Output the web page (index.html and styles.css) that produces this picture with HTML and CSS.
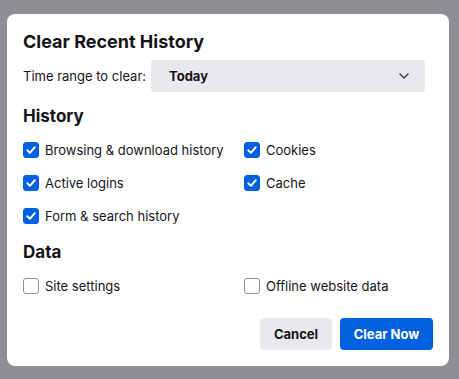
FILE: index.html
```html
<!DOCTYPE html>
<html lang="en">
<head>
    <meta charset="UTF-8">
    <meta name="viewport" content="width=device-width, initial-scale=1.0">
    <title>Clear Recent History</title>
    <link rel="stylesheet" href="styles.css">
</head>
<body>
    <div class="backdrop">
        <div class="dialog">
            <h1>Clear Recent History</h1>
            <div class="range-row">
                <span class="range-label">Time range to clear:</span>
                <div class="select">
                    <span class="select-value">Today</span>
                    <svg class="chevron" width="10" height="6" viewBox="0 0 10 6">
                        <path d="M1 1 L5 5 L9 1" fill="none" stroke="#3a3a3e" stroke-width="1.4" stroke-linecap="round" stroke-linejoin="round"/>
                    </svg>
                </div>
            </div>

            <h2>History</h2>
            <div class="options">
                <label class="option"><span class="box checked"><svg width="12" height="12" viewBox="0 0 12 12"><path d="M2.3 6.3 L4.9 8.8 L9.8 3.2" fill="none" stroke="#fff" stroke-width="2" stroke-linecap="round" stroke-linejoin="round"/></svg></span>Browsing &amp; download history</label>
                <label class="option"><span class="box checked"><svg width="12" height="12" viewBox="0 0 12 12"><path d="M2.3 6.3 L4.9 8.8 L9.8 3.2" fill="none" stroke="#fff" stroke-width="2" stroke-linecap="round" stroke-linejoin="round"/></svg></span>Cookies</label>
                <label class="option"><span class="box checked"><svg width="12" height="12" viewBox="0 0 12 12"><path d="M2.3 6.3 L4.9 8.8 L9.8 3.2" fill="none" stroke="#fff" stroke-width="2" stroke-linecap="round" stroke-linejoin="round"/></svg></span>Active logins</label>
                <label class="option"><span class="box checked"><svg width="12" height="12" viewBox="0 0 12 12"><path d="M2.3 6.3 L4.9 8.8 L9.8 3.2" fill="none" stroke="#fff" stroke-width="2" stroke-linecap="round" stroke-linejoin="round"/></svg></span>Cache</label>
                <label class="option"><span class="box checked"><svg width="12" height="12" viewBox="0 0 12 12"><path d="M2.3 6.3 L4.9 8.8 L9.8 3.2" fill="none" stroke="#fff" stroke-width="2" stroke-linecap="round" stroke-linejoin="round"/></svg></span>Form &amp; search history</label>
            </div>

            <h2 class="data-title">Data</h2>
            <div class="options">
                <label class="option"><span class="box"></span>Site settings</label>
                <label class="option"><span class="box"></span>Offline website data</label>
            </div>

            <div class="buttons">
                <button class="btn btn-cancel">Cancel</button>
                <button class="btn btn-primary">Clear Now</button>
            </div>
        </div>
    </div>
</body>
</html>
```

FILE: styles.css
```css
* {
    margin: 0;
    padding: 0;
    box-sizing: border-box;
}

body {
    background-color: #8f8f93;
    font-family: 'Inter', 'Liberation Sans', sans-serif;
    color: #15141a;
    height: 379px;
    overflow: hidden;
}

.backdrop {
    padding: 14px 10px 0 7px;
}

.dialog {
    background-color: #fff;
    border-radius: 8px;
    width: 442px;
    height: 352px;
    padding: 14px 16px 16px 16px;
    display: flex;
    flex-direction: column;
}

h1 {
    font-size: 18px;
    font-weight: 700;
    line-height: 28px;
}

.range-row {
    display: flex;
    align-items: center;
    margin-top: 4px;
}

.range-label {
    font-size: 13px;
    width: 128px;
}

.select {
    flex: 1;
    height: 32px;
    margin-right: 8px;
    background-color: #e9e9ed;
    border-radius: 4px;
    display: flex;
    align-items: center;
    justify-content: space-between;
    padding: 0 16px 0 18px;
}

.select-value {
    font-size: 13px;
    font-weight: 700;
}

h2 {
    font-size: 17px;
    font-weight: 700;
    line-height: 24px;
    margin-top: 12px;
}

.data-title {
    margin-top: 14px;
}

.options {
    display: grid;
    grid-template-columns: 221px 1fr;
    row-gap: 13px;
    margin-top: 12px;
}

.option {
    display: flex;
    align-items: center;
    height: 20px;
    font-size: 13px;
    white-space: nowrap;
}

.box {
    width: 16px;
    height: 16px;
    border: 1.5px solid #8f8f9d;
    border-radius: 3px;
    margin-right: 6px;
    display: flex;
    align-items: center;
    justify-content: center;
    flex-shrink: 0;
}

.box.checked {
    background-color: #0061e0;
    border-color: #0061e0;
}

.buttons {
    margin-top: auto;
    display: flex;
    justify-content: flex-end;
    gap: 8px;
}

.btn {
    height: 32px;
    border: none;
    border-radius: 4px;
    font-family: inherit;
    font-size: 13px;
    font-weight: 700;
    padding: 0;
    white-space: nowrap;
}

.btn-cancel {
    background-color: #e9e9ed;
    color: #15141a;
    width: 72px;
}

.btn-primary {
    background-color: #0061e0;
    color: #fff;
    width: 93px;
}
```
